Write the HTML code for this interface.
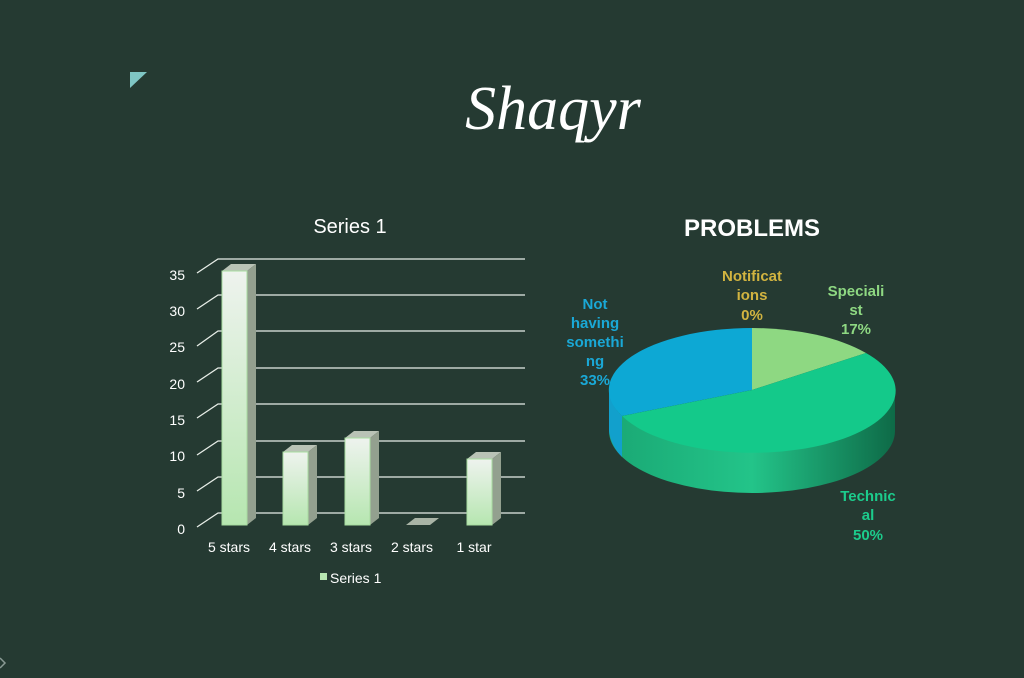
<!DOCTYPE html>
<html><head><meta charset="utf-8"><style>
html,body{margin:0;padding:0;background:#253a32;}
body{width:1024px;height:678px;overflow:hidden;position:relative;}
</style></head><body>
<svg width="1024" height="678" viewBox="0 0 1024 678" xmlns="http://www.w3.org/2000/svg" style="position:absolute;left:0;top:0">
<defs>
<linearGradient id="bar" x1="0" y1="0" x2="0" y2="1"><stop offset="0" stop-color="#eef3ee"/><stop offset="1" stop-color="#b6e6b0"/></linearGradient>
<linearGradient id="side" x1="0" y1="0" x2="1" y2="0"><stop offset="0" stop-color="#1aa874"/><stop offset="0.5" stop-color="#23c489"/><stop offset="1" stop-color="#0e6a47"/></linearGradient>
</defs>
<rect width="1024" height="678" fill="#253a32"/>
<polygon points="130,72 147,72 130,88" fill="#7fc6c4"/>
<path d="M0,658 L5,663 L0,668" fill="none" stroke="#8a9a94" stroke-width="1.5"/>
<text x="553" y="129" font-family="Liberation Serif,serif" font-style="italic" font-size="62" fill="#fff" text-anchor="middle">Shaqyr</text>
<text x="350" y="233" font-family="Liberation Sans,sans-serif" font-size="20" fill="#fff" text-anchor="middle">Series 1</text>
<g stroke="#e8eee8" stroke-width="1.3" fill="none">
<path d="M197,273 L218,259 H525"/><path d="M197,309 L218,295 H525"/><path d="M197,346 L218,331 H525"/><path d="M197,382 L218,368 H525"/><path d="M197,418 L218,404 H525"/><path d="M197,455 L218,441 H525"/><path d="M197,491 L218,477 H525"/><path d="M197,527 L218,513 H525"/>
</g>
<g font-family="Liberation Sans,sans-serif" font-size="14" fill="#fff" text-anchor="end">
<text x="185" y="280">35</text><text x="185" y="316">30</text><text x="185" y="352">25</text><text x="185" y="389">20</text><text x="185" y="425">15</text><text x="185" y="461">10</text><text x="185" y="498">5</text><text x="185" y="534">0</text>
</g>
<g>
<polygon points="222,271 231,264 256,264 247,271" fill="#b9c3b6"/><polygon points="247,271 256,264 256,518 247,525" fill="#93a08f"/><rect x="222" y="271" width="25" height="254" fill="url(#bar)" stroke="#a8dca0"/>
<polygon points="283,452 292,445 317,445 308,452" fill="#b9c3b6"/><polygon points="308,452 317,445 317,518 308,525" fill="#93a08f"/><rect x="283" y="452" width="25" height="73" fill="url(#bar)" stroke="#a8dca0"/>
<polygon points="345,438 354,431 379,431 370,438" fill="#b9c3b6"/><polygon points="370,438 379,431 379,518 370,525" fill="#93a08f"/><rect x="345" y="438" width="25" height="87" fill="url(#bar)" stroke="#a8dca0"/>
<polygon points="406,525 415,518 439,518 430,525" fill="#a9b4a6"/>
<polygon points="467,459 476,452 501,452 492,459" fill="#b9c3b6"/><polygon points="492,459 501,452 501,518 492,525" fill="#93a08f"/><rect x="467" y="459" width="25" height="66" fill="url(#bar)" stroke="#a8dca0"/>
</g>
<g font-family="Liberation Sans,sans-serif" font-size="14" fill="#fff" text-anchor="middle">
<text x="229" y="552">5 stars</text><text x="290" y="552">4 stars</text><text x="351" y="552">3 stars</text><text x="412" y="552">2 stars</text><text x="474" y="552">1 star</text>
</g>
<rect x="320" y="573" width="7" height="7" fill="#b6e6b0"/>
<text x="330" y="583" font-family="Liberation Sans,sans-serif" font-size="14" fill="#fff">Series 1</text>
<text x="752" y="236" font-family="Liberation Sans,sans-serif" font-weight="bold" font-size="24" fill="#fff" text-anchor="middle">PROBLEMS</text>
<path d="M609,390 A143,62 0 0 0 895,390 V431 A143,62 0 0 1 609,431 Z" fill="url(#side)"/>
<path d="M609,390 Q611,406 622,416 L622,457 Q611,446 609,431 Z" fill="#12a0cc"/>
<path d="M752,390 L752,328 A143,62 0 0 0 622,416 Z" fill="#0da8d4"/>
<path d="M752,390 L752,328 A143,62 0 0 1 866,353 Z" fill="#8ed882"/>
<path d="M752,390 L866,353 A143,62 0 1 1 622,416 Z" fill="#14c98a"/>
<g font-family="Liberation Sans,sans-serif" font-weight="bold" font-size="15" text-anchor="middle">
<g fill="#1aa8d6"><text x="595" y="309">Not</text><text x="595" y="328">having</text><text x="595" y="347">somethi</text><text x="595" y="366">ng</text><text x="595" y="385">33%</text></g>
<g fill="#d2b440"><text x="752" y="281">Notificat</text><text x="752" y="300">ions</text><text x="752" y="320">0%</text></g>
<g fill="#8ed882"><text x="856" y="296">Speciali</text><text x="856" y="315">st</text><text x="856" y="334">17%</text></g>
<g fill="#1ccc8c"><text x="868" y="501">Technic</text><text x="868" y="520">al</text><text x="868" y="540">50%</text></g>
</g>
</svg>
</body></html>
